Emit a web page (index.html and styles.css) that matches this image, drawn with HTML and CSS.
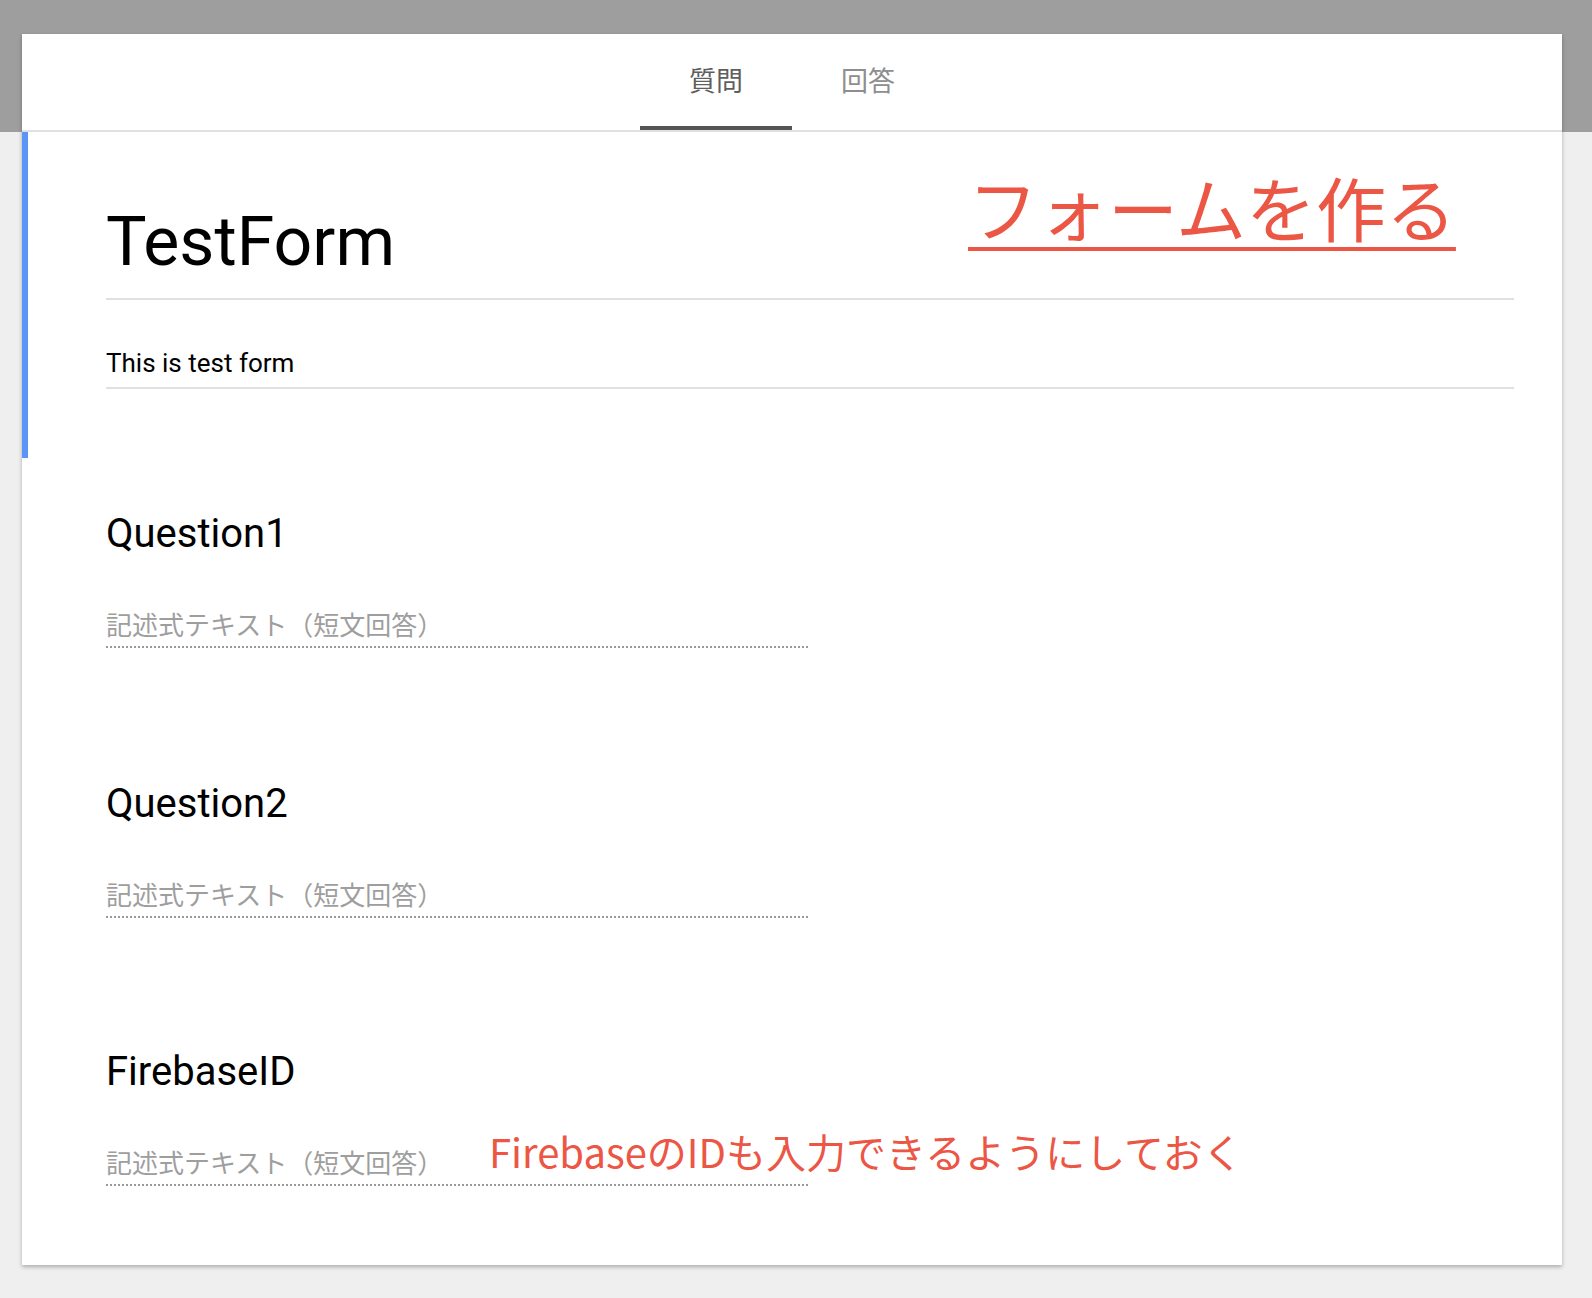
FILE: index.html
```html
<!DOCTYPE html>
<html lang="ja">
<head>
<meta charset="utf-8">
<title>TestForm</title>
<link rel="stylesheet" href="styles.css">
</head>
<body>
<div class="page">
  <div class="card">
    <nav class="tabs">
      <div class="tab active">質問</div>
      <div class="tab">回答</div>
    </nav>
    <section class="header">
      <h1 class="title">TestForm</h1>
      <p class="desc">This is test form</p>
      <div class="note note-make">フォームを作る</div>
    </section>
    <section class="question">
      <div class="q-label">Question1</div>
      <div class="answer">記述式テキスト（短文回答）</div>
    </section>
    <section class="question">
      <div class="q-label">Question2</div>
      <div class="answer">記述式テキスト（短文回答）</div>
    </section>
    <section class="question last">
      <div class="q-label">FirebaseID</div>
      <div class="answer">記述式テキスト（短文回答）<span class="note note-id">FirebaseのIDも入力できるようにしておく</span></div>
    </section>
  </div>
</div>
</body>
</html>
```

FILE: styles.css
```css
html, body {
  margin: 0;
  padding: 0;
}
body {
  background: linear-gradient(to bottom, #9e9e9e 0, #9e9e9e 132px, #efefef 132px, #efefef 100%);
  min-height: 1298px;
  font-family: Roboto, "Noto Sans CJK JP", sans-serif;
  color: #000;
}
.page {
  padding: 34px 30px 33px 22px;
}
.card {
  background: #fff;
  box-shadow: 0 2px 4px rgba(0, 0, 0, 0.28);
  position: relative;
}
.tabs {
  height: 96px;
  border-bottom: 2px solid #e0e0e0;
  display: flex;
  justify-content: center;
}
.tab {
  width: 152px;
  box-sizing: border-box;
  display: flex;
  align-items: center;
  justify-content: center;
  font-family: "Noto Sans CJK JP", sans-serif;
  font-size: 27px;
  color: #8e8e8e;
  padding-bottom: 5px;
}
.tab.active {
  color: #5f5f5f;
  border-bottom: 4px solid #555;
  padding-bottom: 1px;
}
.header {
  position: relative;
  border-left: 6px solid #5b95f8;
  padding: 76px 48px 69px 78px;
}
.title {
  margin: 0;
  font-family: Roboto, sans-serif;
  font-weight: 400;
  font-size: 68px;
  line-height: 68px;
  padding-bottom: 22px;
  border-bottom: 2px solid #e0e0e0;
}
.desc {
  margin: 50px 0 0;
  font-family: Roboto, sans-serif;
  font-size: 26px;
  line-height: 26px;
  padding-bottom: 11px;
  border-bottom: 2px solid #e0e0e0;
}
.note {
  position: absolute;
  font-family: "Noto Sans CJK JP", sans-serif;
  color: #ec5645;
  white-space: nowrap;
}
.note-make {
  left: 940px;
  top: 40px;
  font-size: 70px;
  line-height: 70px;
  text-decoration: underline;
  text-decoration-thickness: 4px;
  text-underline-offset: 10px;
}
.question {
  padding: 56px 48px 0 84px;
}
.question + .question {
  padding-top: 136px;
}
.question.last {
  padding-top: 134px;
  padding-bottom: 79px;
}
.q-label {
  font-family: Roboto, sans-serif;
  font-size: 40px;
  line-height: 40px;
}
.answer {
  position: relative;
  margin-top: 56px;
  width: 702px;
  font-family: "Noto Sans CJK JP", sans-serif;
  font-size: 26px;
  line-height: 27px;
  color: #9e9e9e;
  background-image: repeating-linear-gradient(to right, #9a9a9a 0, #9a9a9a 2px, transparent 2px, transparent 4px);
  background-size: 100% 2px;
  background-position: left bottom;
  background-repeat: no-repeat;
  padding-bottom: 11px;
}
.note-id {
  left: 383px;
  top: -17px;
  font-size: 40px;
  line-height: 40px;
}
```
